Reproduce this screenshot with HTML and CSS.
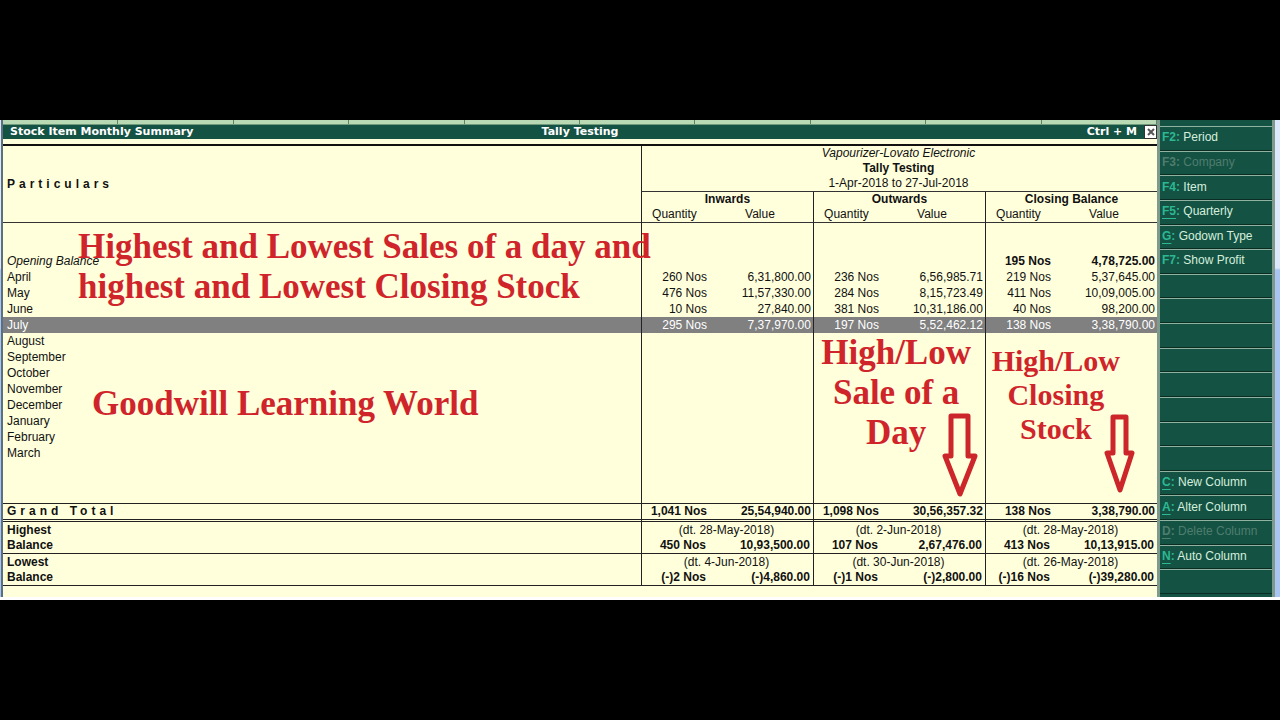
FILE: index.html
```html
<!DOCTYPE html>
<html lang="en">
<head>
    <meta charset="UTF-8">
    <title>Stock Item Monthly Summary</title>
    <link rel="stylesheet" href="styles.css">
</head>
<body>

<div class="app">

  <main class="main">
    <!-- toolbar -->
    <div class="toolbar">
      <span></span><span></span><span></span><span></span><span></span>
      <span></span><span></span><span></span><span></span><span></span>
    </div>

    <!-- title bar -->
    <header class="title-bar">
      <h1>Stock Item Monthly Summary</h1>
      <p>Tally Testing</p>
      <div class="shortcut">Ctrl + M
        <button class="close" type="button" aria-label="Close">
          <svg viewBox="0 0 8 8" width="8" height="8"><path d="M1 1L7 7M7 1L1 7" stroke="#555" stroke-width="2"/></svg>
        </button>
      </div>
    </header>

    <!-- report -->
    <table class="report">
      <colgroup>
        <col>
        <col class="qty"><col class="val">
        <col class="qty"><col class="val">
        <col class="qty"><col class="val">
      </colgroup>
      <thead>
        <tr>
          <th class="spaced" rowspan="3" scope="col">Particulars</th>
          <td class="line period" colspan="6"><i>Vapourizer-Lovato Electronic</i><b>Tally Testing</b>1-Apr-2018 to 27-Jul-2018</td>
        </tr>
        <tr class="groups">
          <th class="line" colspan="2" scope="colgroup">Inwards</th>
          <th class="line" colspan="2" scope="colgroup">Outwards</th>
          <th class="line" colspan="2" scope="colgroup">Closing Balance</th>
        </tr>
        <tr class="units">
          <td class="line">Quantity</td><td>Value</td>
          <td class="line">Quantity</td><td>Value</td>
          <td class="line">Quantity</td><td>Value</td>
        </tr>
      </thead>
      <tbody>
        <tr class="gap"><td></td><td class="line"></td><td></td><td class="line"></td><td></td><td class="line"></td><td></td></tr>
        <tr><td><i>Opening Balance</i></td><td class="line"></td><td></td><td class="line"></td><td></td><td class="line"><b>195 Nos</b></td><td><b>4,78,725.00</b></td></tr>
        <tr><td>April</td><td class="line">260 Nos</td><td>6,31,800.00</td><td class="line">236 Nos</td><td>6,56,985.71</td><td class="line">219 Nos</td><td>5,37,645.00</td></tr>
        <tr><td>May</td><td class="line">476 Nos</td><td>11,57,330.00</td><td class="line">284 Nos</td><td>8,15,723.49</td><td class="line">411 Nos</td><td>10,09,005.00</td></tr>
        <tr><td>June</td><td class="line">10 Nos</td><td>27,840.00</td><td class="line">381 Nos</td><td>10,31,186.00</td><td class="line">40 Nos</td><td>98,200.00</td></tr>
        <tr class="selected"><td>July</td><td class="line">295 Nos</td><td>7,37,970.00</td><td class="line">197 Nos</td><td>5,52,462.12</td><td class="line">138 Nos</td><td>3,38,790.00</td></tr>
        <tr><td>August</td><td class="line"></td><td></td><td class="line"></td><td></td><td class="line"></td><td></td></tr>
        <tr><td>September</td><td class="line"></td><td></td><td class="line"></td><td></td><td class="line"></td><td></td></tr>
        <tr><td>October</td><td class="line"></td><td></td><td class="line"></td><td></td><td class="line"></td><td></td></tr>
        <tr><td>November</td><td class="line"></td><td></td><td class="line"></td><td></td><td class="line"></td><td></td></tr>
        <tr><td>December</td><td class="line"></td><td></td><td class="line"></td><td></td><td class="line"></td><td></td></tr>
        <tr><td>January</td><td class="line"></td><td></td><td class="line"></td><td></td><td class="line"></td><td></td></tr>
        <tr><td>February</td><td class="line"></td><td></td><td class="line"></td><td></td><td class="line"></td><td></td></tr>
        <tr><td>March</td><td class="line"></td><td></td><td class="line"></td><td></td><td class="line"></td><td></td></tr>
        <tr class="gap last"><td></td><td class="line"></td><td></td><td class="line"></td><td></td><td class="line"></td><td></td></tr>
      </tbody>
      <tfoot>
        <tr class="total"><th class="spaced" scope="row">Grand Total</th><td class="line">1,041 Nos</td><td>25,54,940.00</td><td class="line">1,098 Nos</td><td>30,56,357.32</td><td class="line">138 Nos</td><td>3,38,790.00</td></tr>
        <tr class="date"><th rowspan="2" scope="row">Highest<br>Balance</th><td class="line" colspan="2">(dt. 28-May-2018)</td><td class="line" colspan="2">(dt. 2-Jun-2018)</td><td class="line" colspan="2">(dt. 28-May-2018)</td></tr>
        <tr class="balance"><td class="line">450 Nos</td><td>10,93,500.00</td><td class="line">107 Nos</td><td>2,67,476.00</td><td class="line">413 Nos</td><td>10,13,915.00</td></tr>
        <tr class="date"><th rowspan="2" scope="row">Lowest<br>Balance</th><td class="line" colspan="2">(dt. 4-Jun-2018)</td><td class="line" colspan="2">(dt. 30-Jun-2018)</td><td class="line" colspan="2">(dt. 26-May-2018)</td></tr>
        <tr class="balance"><td class="line">(-)2 Nos</td><td>(-)4,860.00</td><td class="line">(-)1 Nos</td><td>(-)2,800.00</td><td class="line">(-)16 Nos</td><td>(-)39,280.00</td></tr>
      </tfoot>
    </table>

    <!-- red notes over the report -->
    <p class="note note-title">Highest and Lowest Sales of a day and<br>highest and Lowest Closing Stock</p>
    <p class="note note-brand">Goodwill Learning World</p>
    <p class="note note-sale">High/Low<br>Sale of a<br>Day</p>
    <p class="note note-stock">High/Low<br>Closing<br>Stock</p>
    <svg class="arrow arrow-sale" viewBox="0 0 36 86" width="36" height="86"><path d="M9 3H26V43H33L18 81L3 43H9Z"/></svg>
    <svg class="arrow arrow-stock" viewBox="0 0 32 80" width="32" height="80"><path d="M9 3H22V39H28L16 76L3 39H9Z"/></svg>
  </main>

  <!-- button bar -->
  <nav class="buttons">
    <button type="button"><b>F2:</b> Period</button>
    <button type="button" disabled><b>F3:</b> Company</button>
    <button type="button"><b>F4:</b> Item</button>
    <button type="button"><b><u>F5</u>:</b> Quarterly</button>
    <button type="button"><b><u>G</u>:</b> Godown Type</button>
    <button type="button"><b>F7:</b> Show Profit</button>
    <span></span><span></span><span></span><span></span>
    <span></span><span></span><span></span><span></span>
    <button type="button"><b><u>C</u>:</b> New Column</button>
    <button type="button"><b><u>A</u>:</b> Alter Column</button>
    <button type="button" disabled><b><u>D</u>:</b> Delete Column</button>
    <button type="button"><b><u>N</u>:</b> Auto Column</button>
    <span></span>
  </nav>
</div>

</body>
</html>
```
FILE: styles.css
```css
* {
box-sizing: border-box;
margin: 0;
padding: 0;
}

body {
min-height: 100vh;
display: flex;
align-items: center;
background-color: #000;
font: 12px/16px "Liberation Sans", Arial, sans-serif;
color: #111;
}

.app {
flex: 1;
display: flex;
padding-left: 1px;
border-bottom: 3px solid #fff;
background: linear-gradient(#dde9fa 148px, #a9c5f2 150px);
}

.main {
flex: 1;
position: relative;
padding-bottom: 11px;
background-color: #ffffdc;
border-left: 2px solid #5c6f80;
}

/*toolbar*/
.toolbar {
display: flex;
height: 5px;
background-color: #b9d8b4;
border-bottom: 1px solid #6f9a7c;
}

.toolbar span {
flex: 1;
border-right: 1px solid #5f8468;
}

/*title bar*/
.title-bar {
display: grid;
grid-template-columns: 1fr auto 1fr;
align-items: center;
height: 14px;
background-color: #145244;
color: #fff;
font: bold 11px/14px "DejaVu Sans", Verdana, sans-serif;
}

.title-bar h1 {
padding-left: 7px;
font-size: 11px;
}

.shortcut {
display: flex;
justify-content: flex-end;
gap: 7px;
}

.close {
display: flex;
align-items: center;
justify-content: center;
width: 13px;
height: 14px;
border: 1px solid #333;
background-color: #fff;
}

/*report*/
.report {
width: 100%;
margin-top: 5px;
table-layout: fixed;
border-collapse: separate;
border-spacing: 0;
border-top: 2px solid #111;
}

.qty {
width: 68px;
}

.val {
width: 104px;
}

.report td,
.report th {
height: 16px;
padding-right: 2px;
text-align: right;
white-space: nowrap;
}

.report th:first-child,
.report td:first-child:not(.line) {
padding-left: 4px;
text-align: left;
}

.report .line {
border-left: 1px solid #222;
}

.report thead td,
.report thead .line,
.report thead .line:first-child {
text-align: center;
}

.report .spaced {
letter-spacing: 4px;
}

.report .period {
border-bottom: 1px solid #333;
line-height: 15px;
}

.period i,
.period b {
display: block;
}

.report thead .spaced,
.units td {
border-bottom: 1px solid #333;
}

.report .groups th {
height: 15px;
padding: 0;
line-height: 15px;
}

.report .units td {
height: 16px;
line-height: 15px;
}

.report .gap td {
height: 30px;
}

.report .last td {
height: 43px;
border-bottom: 1px solid #222;
}

.selected td {
background-color: #808080;
color: #fff;
}

.total td,
.balance td {
font-weight: bold;
}

.report .total td,
.report .total th {
height: 18px;
line-height: 15px;
border-bottom: 3px double #222;
}

.report .date td {
text-align: center;
}

.date th,
.balance td {
border-bottom: 1px solid #222;
}

.report .balance td {
height: 16px;
padding-right: 3px;
line-height: 15px;
}

.date th {
line-height: 15px;
}

/*notes*/
.note {
position: absolute;
color: #d0242b;
font: bold 35px/40px "Liberation Serif", "Times New Roman", serif;
white-space: nowrap;
}

.note-title {
top: 107px;
left: 75px;
}

.note-brand {
top: 264px;
left: 89px;
}

.note-sale {
top: 213px;
right: 186px;
text-align: center;
}

.note-stock {
top: 224px;
right: 37px;
font-size: 30px;
line-height: 34px;
text-align: center;
}

.arrow {
position: absolute;
fill: none;
stroke: #cc262b;
stroke-width: 5;
stroke-linejoin: round;
}

.arrow-sale {
top: 293px;
right: 179px;
}

.arrow-stock {
top: 294px;
right: 21px;
}

/*button bar*/
.buttons {
display: grid;
grid-template-rows: repeat(19, 1fr);
width: 118px;
margin-right: 5px;
padding: 6px 0 3px;
background-color: #145244;
border-left: 3px solid #7d9a8c;
border-right: 3px solid #7d9a8c;
}

.buttons button,
.buttons span {
min-height: 0;
border: 0;
border-top: 1px solid #8fb3a0;
border-bottom: 1px solid #0a2c22;
background-color: #145244;
}

.buttons button {
padding: 0 0 2px 2px;
color: #d5efdc;
font: inherit;
text-align: left;
white-space: nowrap;
}

.buttons b {
color: #2cb892;
}

.buttons u {
text-underline-offset: 3px;
}

.buttons button:disabled,
.buttons button:disabled b {
color: #4f7d6d;
}
```
